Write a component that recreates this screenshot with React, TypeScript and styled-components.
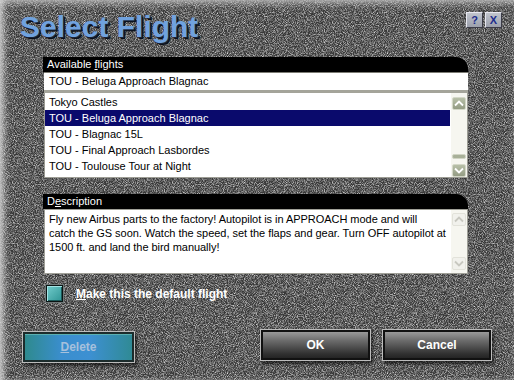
import styled, { createGlobalStyle, css } from 'styled-components';

const noise = `url("data:image/svg+xml,%3Csvg xmlns='http://www.w3.org/2000/svg' width='160' height='160'%3E%3Cfilter id='n'%3E%3CfeTurbulence type='fractalNoise' baseFrequency='1.1' numOctaves='2' stitchTiles='stitch'/%3E%3CfeColorMatrix values='0 0 0 0 1 0 0 0 0 1 0 0 0 0 1 1.6 0 0 0 -0.6'/%3E%3C/filter%3E%3Crect width='100%25' height='100%25' filter='url(%23n)'/%3E%3C/svg%3E")`;

const GlobalStyle = createGlobalStyle`
  html, body {
    margin: 0;
    padding: 0;
    background: #3b3b3b;
  }
  body {
    font-family: "Liberation Sans", Arial, sans-serif;
  }
`;

const Window = styled.div`
  width: 514px;
  height: 380px;
  box-sizing: border-box;
  overflow: hidden;
  display: flex;
  flex-direction: column;
  background-color: #383838;
  background-image: ${noise};
  box-shadow: inset 6px 0 6px -2px rgba(215, 215, 215, 0.85),
    inset 0 6px 6px -2px rgba(190, 190, 190, 0.7);
`;

const TitleRow = styled.div`
  height: 57px;
  box-sizing: border-box;
  padding: 10px 12px 0 20px;
  display: flex;
  justify-content: space-between;
  align-items: flex-start;
`;

const Title = styled.h1`
  margin: 0;
  font: bold 30px/34px "Liberation Sans", Arial, sans-serif;
  color: #70a2de;
  text-shadow: 1px 1px 0 #1a2438, 2px 2px 0 #0a0f18;
`;

const HelpGroup = styled.div`
  display: flex;
  gap: 2px;
  margin-top: 2px;
`;

const HelpButton = styled.div`
  width: 17px;
  height: 16px;
  box-sizing: border-box;
  border: 1px solid;
  border-color: #e8e8f0 #3c3c48 #3c3c48 #e8e8f0;
  background: linear-gradient(#c0c4cc, #9ca0ac);
  color: #1c2c8c;
  font: bold 11px "Liberation Sans", Arial, sans-serif;
  display: flex;
  align-items: center;
  justify-content: center;
`;

const Group = styled.div<{ $top?: number }>`
  margin-left: 43px;
  margin-top: ${p => p.$top ?? 0}px;
  width: 425px;
  display: flex;
  flex-direction: column;
`;

const LabelBar = styled.div<{ $h: number }>`
  height: ${p => p.$h}px;
  line-height: ${p => p.$h}px;
  background: #000;
  border-top-right-radius: 12px;
  color: #fff;
  font-size: 11px;
  padding-left: 4px;
`;

const SingleInput = styled.div`
  height: 21px;
  box-sizing: border-box;
  margin-left: 1px;
  background: #fff;
  border-top: 1px solid #7c7c74;
  border-bottom: 3px solid #a4a49a;
  padding-left: 5px;
  font-size: 11px;
  line-height: 17px;
  color: #000;
`;

const ListBox = styled.div`
  height: 85px;
  box-sizing: border-box;
  margin-left: 1px;
  background: #fff;
  border: 1px solid #9c9c94;
  border-top: none;
  display: flex;
`;

const Rows = styled.div`
  flex: 1;
  padding-top: 1px;
  margin-right: 1px;
`;

const Row = styled.div<{ $selected?: boolean }>`
  height: 16px;
  line-height: 16px;
  padding-left: 4px;
  font-size: 11px;
  color: #000;
  ${p =>
    p.$selected &&
    css`
      background: #0a0a6c;
      color: #fff;
    `}
`;

const Track = styled.div<{ $spread?: boolean }>`
  width: 16px;
  background: #f6f6f0;
  display: flex;
  flex-direction: column;
  align-items: center;
  justify-content: ${p => (p.$spread ? 'space-between' : 'flex-start')};
  padding: ${p => (p.$spread ? '3px 0 3px' : '4px 0 0')};
`;

const ScrollBtn = styled.div<{ $disabled?: boolean }>`
  width: 14px;
  height: 13px;
  box-sizing: border-box;
  border-radius: 2px;
  display: flex;
  align-items: center;
  justify-content: center;
  border: 1px solid ${p => (p.$disabled ? '#e2e2da' : '#d4d8c8')};
  background: ${p =>
    p.$disabled ? '#f1f1ec' : 'linear-gradient(#b8c0a8, #949c84)'};
  color: ${p => (p.$disabled ? '#c8c8c0' : '#fff')};
`;

const Thumb = styled.div`
  width: 14px;
  height: 5px;
  border-radius: 2px;
  background: #a8b098;
  border: 1px solid #d0d4c4;
  box-sizing: border-box;
  margin-top: auto;
  margin-bottom: 5px;
`;

const DescBox = styled.div`
  height: 65px;
  box-sizing: border-box;
  margin-left: 1px;
  background: #fff;
  border: 1px solid #a0a098;
  display: flex;
`;

const DescText = styled.div`
  flex: 1;
  min-width: 0;
  padding: 2px 2px 2px 4px;
  font-size: 11px;
  line-height: 14px;
  letter-spacing: -0.04px;
  white-space: nowrap;
  color: #000;
`;

const CheckRow = styled.div`
  margin: 11px 0 0 46px;
  display: flex;
  align-items: center;
`;

const CheckBox = styled.div`
  width: 17px;
  height: 17px;
  box-sizing: border-box;
  border: 1px solid #0a1414;
  background: linear-gradient(135deg, #72cccc, #2e9494);
  box-shadow: 0 0 0 1px #707878, inset 1px 1px 0 #a4e4e4, inset -1px -1px 0 #1c5a5a;
`;

const CheckLabel = styled.span`
  margin-left: 13px;
  font: bold 12px "Liberation Sans", Arial, sans-serif;
  color: #fff;
`;

const ButtonRow = styled.div`
  margin-top: 27px;
  padding: 0 22px;
  display: flex;
  align-items: flex-start;
  gap: 11px;
`;

const Button = styled.div<{ $w: number; $variant?: 'blue' }>`
  width: ${p => p.$w}px;
  height: 32px;
  box-sizing: border-box;
  border: 1px solid #bcbcbc;
  display: flex;
  align-items: center;
  justify-content: center;
  font: bold 12px "Liberation Sans", Arial, sans-serif;
  color: #fff;
  box-shadow: inset 0 0 0 2px #111, 2px 3px 3px rgba(0, 0, 0, 0.6);
  background: linear-gradient(#a4a4a4 0%, #6c6c6c 35%, #303030 80%, #1e1e1e 100%);
  ${p =>
    p.$variant === 'blue' &&
    css`
      margin-top: 2px;
      margin-right: auto;
      color: #a6c0dc;
      box-shadow: inset 0 0 0 2px #1c2c2c, inset 0 3px 0 #5ab0b0, 2px 3px 3px rgba(0, 0, 0, 0.6);
      background: linear-gradient(90deg, #2e8a8a 0%, #3a8ece 35%, #3d90d2 60%, #2f8a92 100%);
    `}
`;

const Chevron = ({ up }: { up?: boolean }) => (
  <svg width="10" height="7" viewBox="0 0 10 7">
    <path
      d={up ? 'M1 5.5 L5 1.5 L9 5.5' : 'M1 1.5 L5 5.5 L9 1.5'}
      fill="none"
      stroke="currentColor"
      strokeWidth="1.8"
    />
  </svg>
);

const flights = [
  'Tokyo Castles',
  'TOU - Beluga Approach Blagnac',
  'TOU - Blagnac 15L',
  'TOU - Final Approach Lasbordes',
  'TOU - Toulouse Tour at Night',
];

const description = [
  'Fly new Airbus parts to the factory! Autopilot is in APPROACH mode and will',
  'catch the GS soon. Watch the speed, set the flaps and gear. Turn OFF autopilot at',
  '1500 ft. and land the bird manually!',
];

export default function App() {
  const selected = flights[1];
  return (
    <>
      <GlobalStyle />
      <Window>
        <TitleRow>
          <Title>Select Flight</Title>
          <HelpGroup>
            <HelpButton>?</HelpButton>
            <HelpButton>X</HelpButton>
          </HelpGroup>
        </TitleRow>

        <Group>
          <LabelBar $h={15}>
            Available <u>f</u>lights
          </LabelBar>
          <SingleInput>{selected}</SingleInput>
          <ListBox>
            <Rows>
              {flights.map(f => (
                <Row key={f} $selected={f === selected}>
                  {f}
                </Row>
              ))}
            </Rows>
            <Track>
              <ScrollBtn>
                <Chevron up />
              </ScrollBtn>
              <Thumb />
              <ScrollBtn>
                <Chevron />
              </ScrollBtn>
            </Track>
          </ListBox>
        </Group>

        <Group $top={16}>
          <LabelBar $h={15}>
            D<u>e</u>scription
          </LabelBar>
          <DescBox>
            <DescText>
              {description.map((line, i) => (
                <div key={i}>{line}</div>
              ))}
            </DescText>
            <Track $spread>
              <ScrollBtn $disabled>
                <Chevron up />
              </ScrollBtn>
              <ScrollBtn $disabled>
                <Chevron />
              </ScrollBtn>
            </Track>
          </DescBox>
        </Group>

        <CheckRow>
          <CheckBox />
          <CheckLabel>
            <u>M</u>ake this the default flight
          </CheckLabel>
        </CheckRow>

        <ButtonRow>
          <Button $w={113} $variant="blue">
            <u>D</u>elete
          </Button>
          <Button $w={111}>OK</Button>
          <Button $w={110}>Cancel</Button>
        </ButtonRow>
      </Window>
    </>
  );
}
